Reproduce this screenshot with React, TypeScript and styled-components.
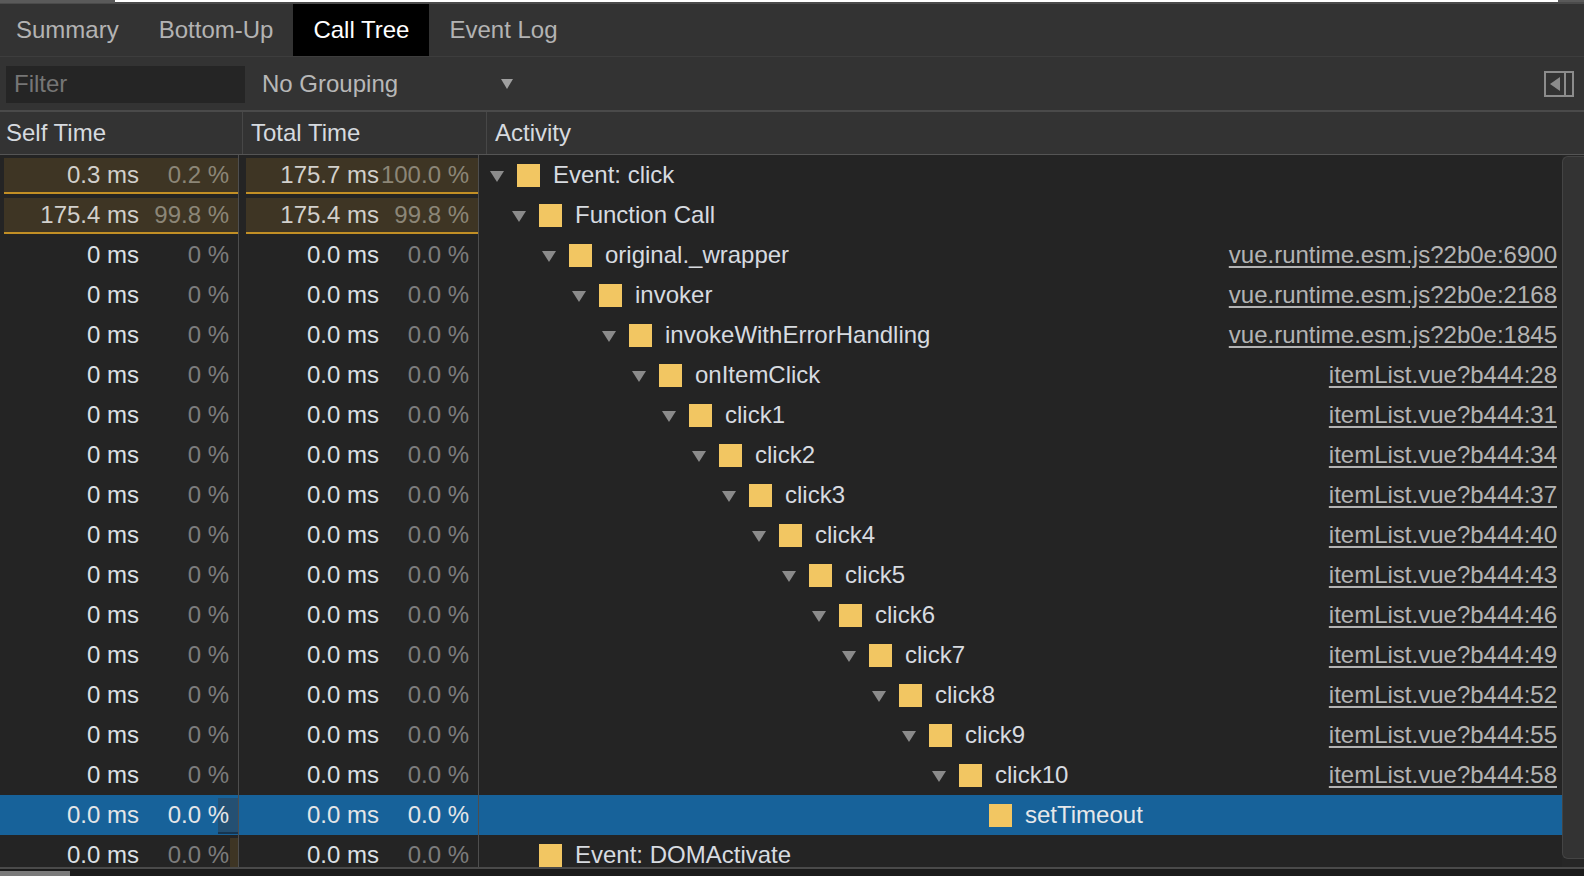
import React from 'react';
import styled, { createGlobalStyle } from 'styled-components';

const GlobalStyle = createGlobalStyle`
  html, body { margin: 0; padding: 0; background: #ffffff; }
  body { font-family: "Liberation Sans", Arial, Helvetica, sans-serif; overflow: hidden; }
  #root { width: 1584px; height: 876px; }
`;

const Page = styled.div`
  width: 1584px;
  height: 876px;
  display: flex;
  flex-direction: column;
  background: #242424;
  overflow: hidden;
  font-size: 24px;
`;

const TopStrip = styled.div`
  height: 4px;
  flex: none;
  display: flex;
  align-items: flex-start;
  background: linear-gradient(#ffffff 0 2px, #4b4b4b 2px 4px);
`;

const StripThumb = styled.div<{ $w: number; $h: number }>`
  width: ${(p) => p.$w}px;
  height: ${(p) => p.$h}px;
  background: #5a5a5a;
  flex: none;
`;

const StripGap = styled.div`
  flex: 1;
`;

const TabBar = styled.div`
  height: 52px;
  flex: none;
  display: flex;
  background: #333333;
  border-bottom: 1px solid #3d3d3d;
`;

const Tab = styled.div<{ $active?: boolean }>`
  padding: 0 20px;
  line-height: 52px;
  white-space: nowrap;
  color: ${(p) => (p.$active ? '#ffffff' : '#b3b3b3')};
  background: ${(p) => (p.$active ? '#000000' : 'transparent')};
  &:first-child { padding-left: 16px; }
`;

const Toolbar = styled.div`
  height: 55px;
  flex: none;
  display: flex;
  align-items: center;
  background: #333333;
  border-bottom: 2px solid #4a4a4a;
  padding: 0 10px 0 6px;
  box-sizing: border-box;
`;

const FilterInput = styled.input`
  width: 239px;
  height: 37px;
  box-sizing: border-box;
  margin-top: 1px;
  border: none;
  outline: none;
  background: #252525;
  padding: 0 0 0 8px;
  font: inherit;
  font-size: 24px;
  color: #d0d0d0;
  &::placeholder { color: #767676; }
`;

const GroupSelect = styled.div`
  width: 290px;
  display: flex;
  align-items: center;
  padding: 0 22px 0 17px;
  box-sizing: border-box;
  color: #b8b8b8;
  white-space: nowrap;
`;

const SelectArrow = styled.svg`
  margin-left: auto;
  flex: none;
`;

const ToolbarSpacer = styled.div`
  flex: 1;
`;

const Header = styled.div`
  height: 42px;
  flex: none;
  display: grid;
  grid-template-columns: 243px 244px 1fr;
  background: #333333;
  border-bottom: 1px solid #555555;
`;

const HeaderCell = styled.div<{ $last?: boolean }>`
  line-height: 42px;
  padding-left: 8px;
  color: #d6dadf;
  white-space: nowrap;
  border-right: ${(p) => (p.$last ? 'none' : '1px solid #474747')};
  &:first-child { padding-left: 6px; }
`;

const Body = styled.div`
  flex: 1;
  min-height: 0;
  display: flex;
`;

const Rows = styled.div`
  flex: 1;
  min-width: 0;
  overflow: hidden;
`;

const Row = styled.div<{ $selected?: boolean }>`
  height: 40px;
  display: grid;
  grid-template-columns: 239px 240px 1fr;
  background: ${(p) => (p.$selected ? '#17629a' : 'transparent')};
`;

const TimeCell = styled.div`
  position: relative;
  display: flex;
  justify-content: flex-end;
  align-items: center;
  padding-right: 9px;
  border-right: 1px solid #4e4e4e;
  white-space: nowrap;
  line-height: 40px;
`;

const Bar = styled.div<{ $selected?: boolean }>`
  position: absolute;
  top: 3px;
  bottom: 1px;
  right: 0;
  box-sizing: border-box;
  background: ${(p) => (p.$selected ? '#245073' : '#3e3524')};
  border-bottom: 2px solid ${(p) => (p.$selected ? '#163550' : '#c28f25')};
`;

const Ms = styled.span<{ $tone: 'hot' | 'normal' | 'selected' }>`
  position: relative;
  color: ${(p) => (p.$tone === 'hot' ? '#d2d0cc' : p.$tone === 'selected' ? '#e4e6e8' : '#dde1e6')};
`;

const Pct = styled.span<{ $tone: 'hot' | 'normal' | 'selected' }>`
  position: relative;
  width: 90px;
  text-align: right;
  color: ${(p) => (p.$tone === 'hot' ? '#8c8677' : p.$tone === 'selected' ? '#e4e6e8' : '#7c7c7c')};
`;

const ActivityCell = styled.div<{ $indent: number }>`
  display: flex;
  align-items: center;
  padding-left: ${(p) => p.$indent}px;
  padding-right: 5px;
  min-width: 0;
  white-space: nowrap;
`;

const Toggle = styled.div<{ $show: boolean }>`
  width: 27px;
  flex: none;
  display: flex;
  align-items: center;
  padding-top: 3px;
  visibility: ${(p) => (p.$show ? 'visible' : 'hidden')};
`;

const Swatch = styled.div`
  width: 23px;
  height: 23px;
  flex: none;
  background: #f2c662;
  margin-right: 13px;
`;

const Name = styled.span<{ $selected?: boolean }>`
  color: ${(p) => (p.$selected ? '#e6e8ea' : '#d7dbe0')};
`;

const SourceLink = styled.span`
  margin-left: auto;
  color: #b3b3b3;
  text-decoration: underline;
  text-underline-offset: 3px;
`;

const VScroll = styled.div`
  width: 22px;
  flex: none;
  display: flex;
  flex-direction: column;
  background: #262626;
`;

const VThumb = styled.div`
  height: 703px;
  margin-top: 1px;
  box-sizing: border-box;
  background: #333333;
  border: 1px solid #444444;
  border-right: none;
  border-radius: 6px 0 0 6px;
`;

const BottomLine = styled.div`
  height: 2px;
  flex: none;
  background: #4a4a4a;
`;

const HScroll = styled.div`
  height: 7px;
  flex: none;
  display: flex;
  align-items: flex-end;
  background: #1b1b1b;
`;

const HThumb = styled.div`
  width: 70px;
  height: 5px;
  background: #7a7a7a;
`;

type Row = {
  self: string;
  selfPct: string;
  total: string;
  totalPct: string;
  name: string;
  indent: number;
  expandable: boolean;
  link?: string;
  selfBar?: number;
  totalBar?: number;
  hot?: boolean;
  selected?: boolean;
};

const lvl = (l: number) => 33 + (l - 1) * 30;

const zeroRow = (name: string, level: number, link: string): Row => ({
  self: '0 ms',
  selfPct: '0 %',
  total: '0.0 ms',
  totalPct: '0.0 %',
  name,
  indent: lvl(level),
  expandable: true,
  link,
});

const rows: Row[] = [
  { self: '0.3 ms', selfPct: '0.2 %', total: '175.7 ms', totalPct: '100.0 %', name: 'Event: click', indent: 11, expandable: true, selfBar: 234, totalBar: 232, hot: true },
  { self: '175.4 ms', selfPct: '99.8 %', total: '175.4 ms', totalPct: '99.8 %', name: 'Function Call', indent: lvl(1), expandable: true, selfBar: 234, totalBar: 232, hot: true },
  zeroRow('original._wrapper', 2, 'vue.runtime.esm.js?2b0e:6900'),
  zeroRow('invoker', 3, 'vue.runtime.esm.js?2b0e:2168'),
  zeroRow('invokeWithErrorHandling', 4, 'vue.runtime.esm.js?2b0e:1845'),
  zeroRow('onItemClick', 5, 'itemList.vue?b444:28'),
  ...Array.from({ length: 10 }, (_, i) => zeroRow(`click${i + 1}`, 6 + i, `itemList.vue?b444:${31 + i * 3}`)),
  { self: '0.0 ms', selfPct: '0.0 %', total: '0.0 ms', totalPct: '0.0 %', name: 'setTimeout', indent: lvl(16), expandable: false, selfBar: 20, selected: true },
  { self: '0.0 ms', selfPct: '0.0 %', total: '0.0 ms', totalPct: '0.0 %', name: 'Event: DOMActivate', indent: lvl(1), expandable: false, selfBar: 8 },
];

const Triangle = () => (
  <svg width="14" height="11" viewBox="0 0 14 11">
    <polygon points="0,0 14,0 7,11" fill="#8b8b8b" />
  </svg>
);

const PanelIcon = () => (
  <svg width="30" height="26" viewBox="0 0 30 26">
    <rect x="1" y="1" width="28" height="24" fill="none" stroke="#8c8c8c" strokeWidth="2" />
    <line x1="21" y1="1" x2="21" y2="25" stroke="#8c8c8c" strokeWidth="2" />
    <polygon points="6,13 16,6 16,20" fill="#8c8c8c" />
  </svg>
);

export default function App() {
  return (
    <>
      <GlobalStyle />
      <Page>
        <TopStrip>
          <StripThumb $w={115} $h={3} />
          <StripGap />
          <StripThumb $w={26} $h={2} />
        </TopStrip>
        <TabBar>
          <Tab>Summary</Tab>
          <Tab>Bottom-Up</Tab>
          <Tab $active>Call Tree</Tab>
          <Tab>Event Log</Tab>
        </TabBar>
        <Toolbar>
          <FilterInput placeholder="Filter" />
          <GroupSelect>
            No Grouping
            <SelectArrow width="12" height="10" viewBox="0 0 12 10">
              <polygon points="0,0 12,0 6,10" fill="#a0a0a0" />
            </SelectArrow>
          </GroupSelect>
          <ToolbarSpacer />
          <PanelIcon />
        </Toolbar>
        <Header>
          <HeaderCell>Self Time</HeaderCell>
          <HeaderCell>Total Time</HeaderCell>
          <HeaderCell $last>Activity</HeaderCell>
        </Header>
        <Body>
          <Rows>
            {rows.map((r, i) => {
              const tone = r.selected ? 'selected' : r.hot ? 'hot' : 'normal';
              return (
                <Row key={i} $selected={r.selected}>
                  <TimeCell>
                    {r.selfBar ? <Bar $selected={r.selected} style={{ width: r.selfBar }} /> : null}
                    <Ms $tone={tone}>{r.self}</Ms>
                    <Pct $tone={tone}>{r.selfPct}</Pct>
                  </TimeCell>
                  <TimeCell>
                    {r.totalBar ? <Bar $selected={r.selected} style={{ width: r.totalBar }} /> : null}
                    <Ms $tone={tone}>{r.total}</Ms>
                    <Pct $tone={tone}>{r.totalPct}</Pct>
                  </TimeCell>
                  <ActivityCell $indent={r.indent}>
                    <Toggle $show={r.expandable}>
                      <Triangle />
                    </Toggle>
                    <Swatch />
                    <Name $selected={r.selected}>{r.name}</Name>
                    {r.link ? <SourceLink>{r.link}</SourceLink> : null}
                  </ActivityCell>
                </Row>
              );
            })}
          </Rows>
          <VScroll>
            <VThumb />
          </VScroll>
        </Body>
        <BottomLine />
        <HScroll>
          <HThumb />
        </HScroll>
      </Page>
    </>
  );
}
